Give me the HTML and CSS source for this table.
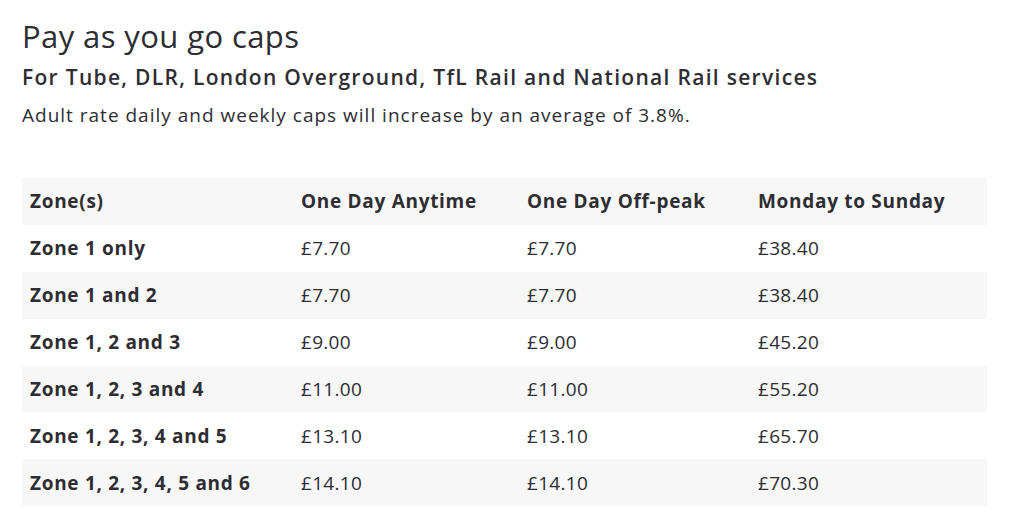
FILE: index.html
```html
<!DOCTYPE html>
<html lang="en">
<head>
<meta charset="utf-8">
<title>Pay as you go caps</title>
<link rel="stylesheet" href="styles.css">
</head>
<body>
<main class="page">
  <h1 class="title">Pay as you go caps</h1>
  <h2 class="subtitle">For Tube, DLR, London Overground, TfL Rail and National Rail services</h2>
  <p class="intro">Adult rate daily and weekly caps will increase by an average of 3.8%.</p>
  <table class="caps">
    <thead>
      <tr><th>Zone(s)</th><th>One Day Anytime</th><th>One Day Off-peak</th><th>Monday to Sunday</th></tr>
    </thead>
    <tbody>
      <tr><th>Zone 1 only</th><td>£7.70</td><td>£7.70</td><td>£38.40</td></tr>
      <tr><th>Zone 1 and 2</th><td>£7.70</td><td>£7.70</td><td>£38.40</td></tr>
      <tr><th>Zone 1, 2 and 3</th><td>£9.00</td><td>£9.00</td><td>£45.20</td></tr>
      <tr><th>Zone 1, 2, 3 and 4</th><td>£11.00</td><td>£11.00</td><td>£55.20</td></tr>
      <tr><th>Zone 1, 2, 3, 4 and 5</th><td>£13.10</td><td>£13.10</td><td>£65.70</td></tr>
      <tr><th>Zone 1, 2, 3, 4, 5 and 6</th><td>£14.10</td><td>£14.10</td><td>£70.30</td></tr>
    </tbody>
  </table>
</main>
</body>
</html>
```

FILE: styles.css
```css
html, body {
  margin: 0;
  padding: 0;
  background: #ffffff;
}
body {
  font-family: "Open Sans", "Liberation Sans", sans-serif;
  color: #2d2d32;
}
.page {
  padding: 18px 22px 0 22px;
  width: 965px;
}
.title {
  margin: 0;
  font-size: 31px;
  line-height: 36px;
  font-weight: 500;
  letter-spacing: 0.4px;
}
.subtitle {
  margin: 9px 0 0 0;
  font-size: 21px;
  line-height: 28px;
  font-weight: 600;
  letter-spacing: 1.3px;
}
.intro {
  margin: 11px 0 0 0;
  font-size: 19px;
  line-height: 26px;
  letter-spacing: 1px;
}
.caps {
  margin-top: 50px;
  width: 965px;
  border-collapse: collapse;
  table-layout: fixed;
}
.caps th, .caps td {
  text-align: left;
  padding: 0 8px;
  height: 46.9px;
  font-size: 19px;
  vertical-align: middle;
}
.caps th {
  font-weight: 700;
  letter-spacing: 0.7px;
}
.caps td {
  font-weight: 400;
  letter-spacing: 0.3px;
}
.caps th:nth-child(1) { width: 255px; }
.caps th:nth-child(2) { width: 210px; }
.caps th:nth-child(3) { width: 215px; }
.caps thead tr,
.caps tbody tr:nth-child(even) {
  background: #f7f7f7;
}
```
